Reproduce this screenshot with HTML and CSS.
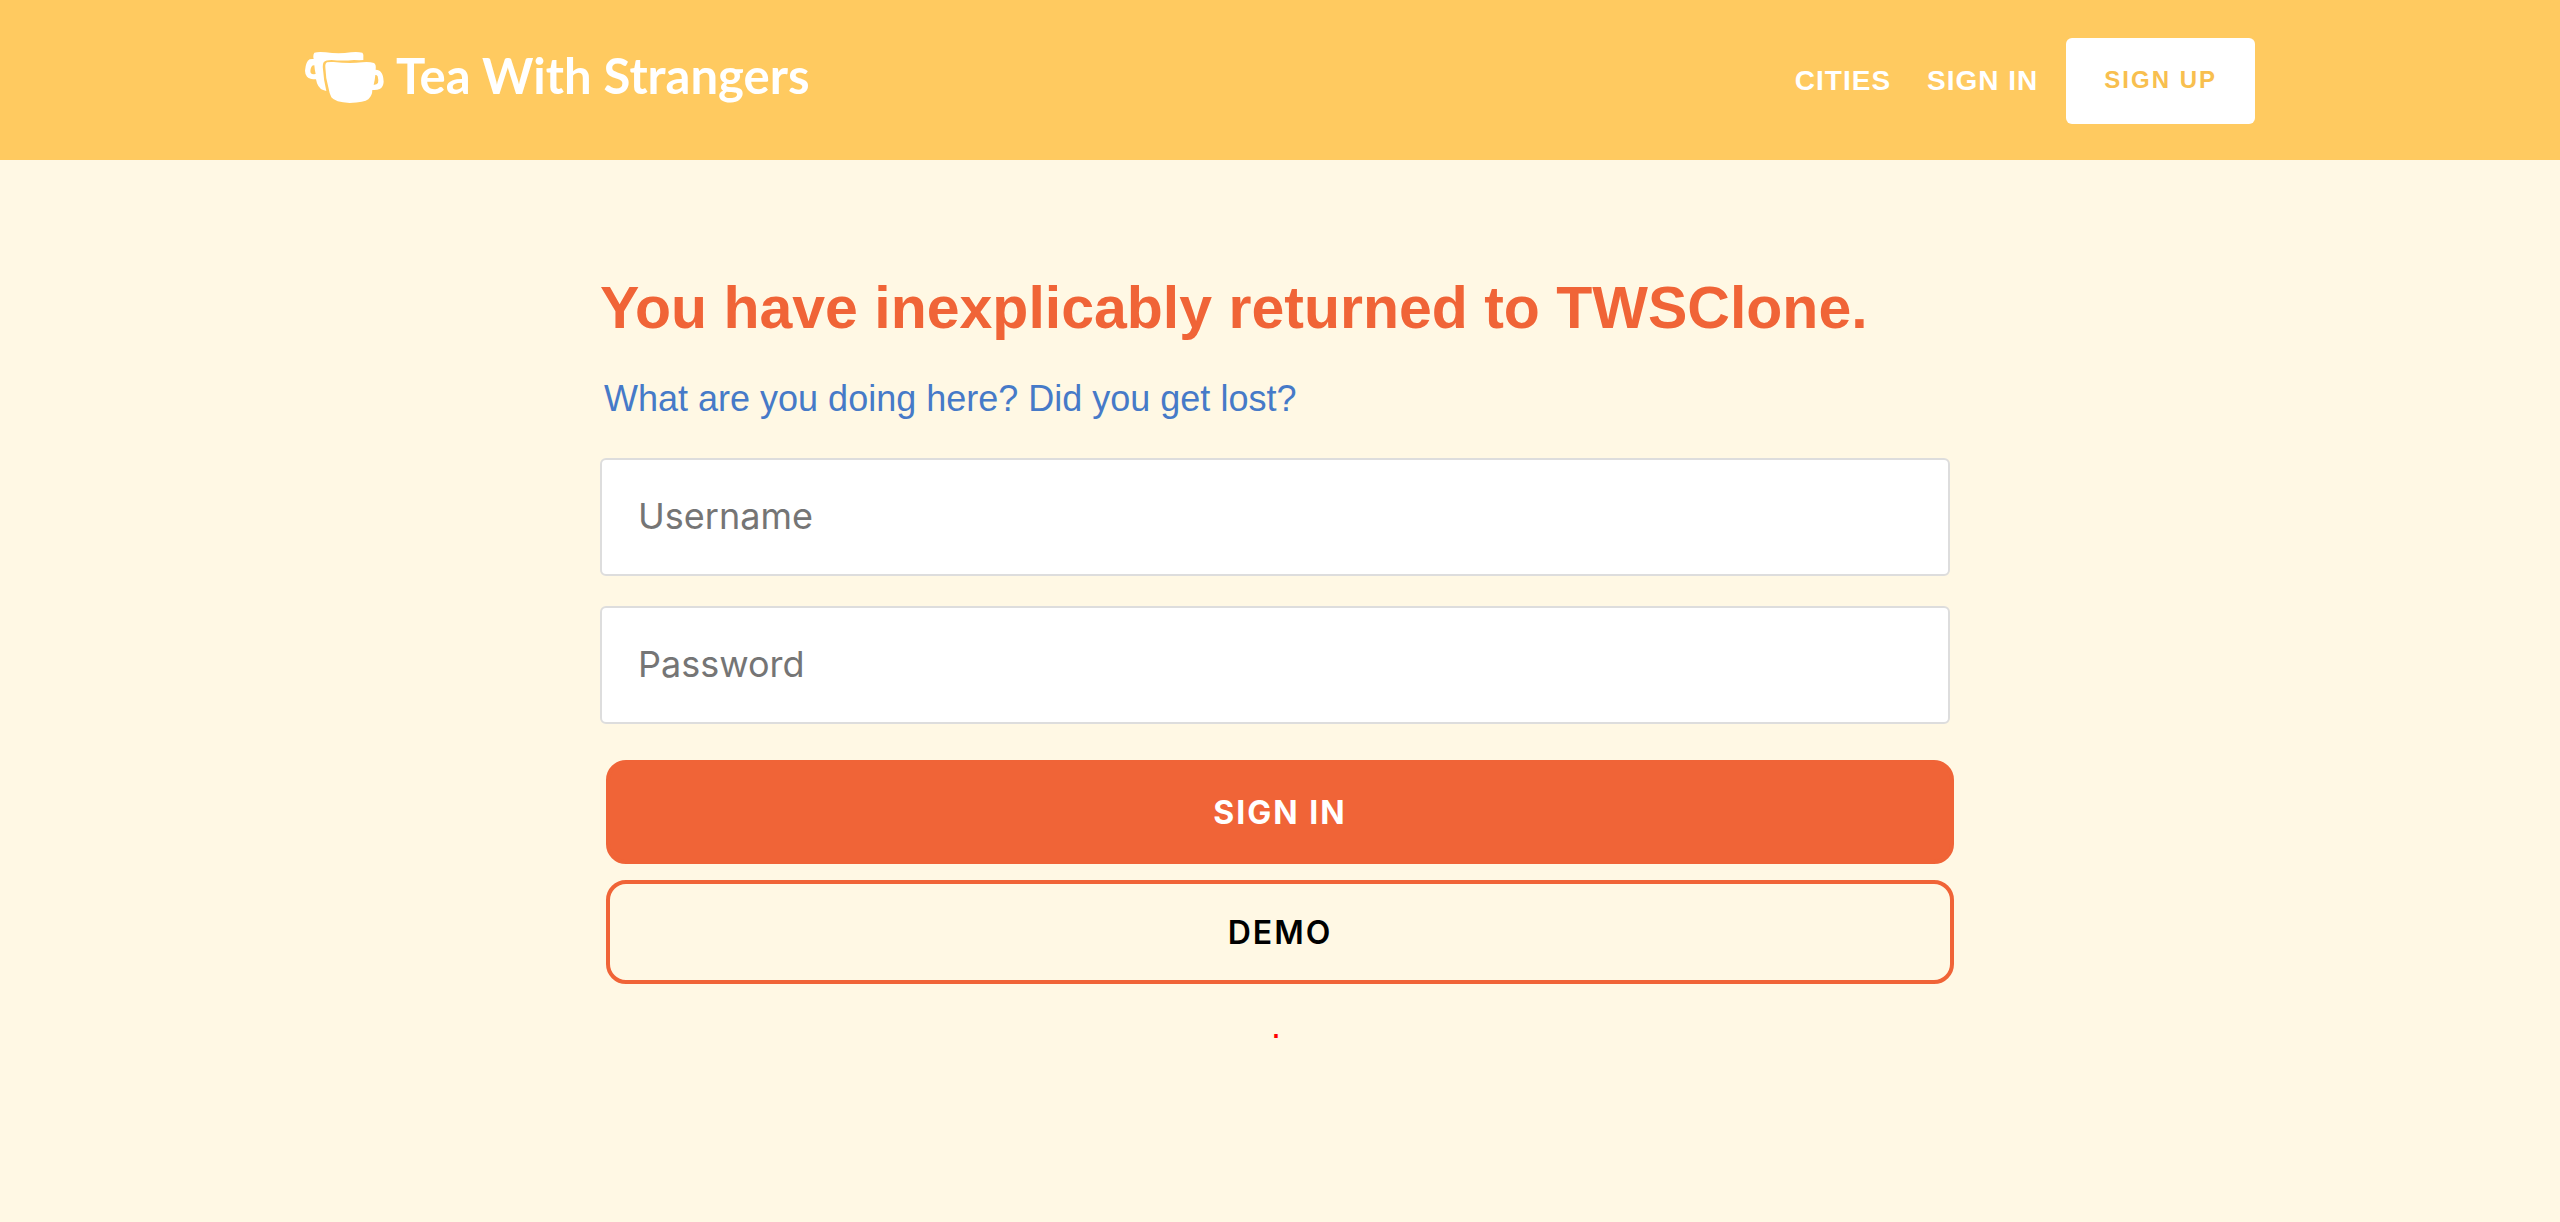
FILE: index.html
```html
<!DOCTYPE html>
<html lang="en">
<head>
<meta charset="utf-8">
<meta name="viewport" content="width=device-width, initial-scale=1">
<title>Sign in - Tea With Strangers</title>
<link rel="stylesheet" href="styles.css">
</head>
<body>
<header class="site-header">
  <div class="header-inner">
    <a class="logo" href="#">
      <svg class="logo-mugs" viewBox="18 36 237 153" aria-hidden="true">
        <path class="mug" d="M46 38Q58 35 80 37Q119 43 156 37Q175 35 190 38Q194 42 193 50V60Q182 61 165 60Q130 63 98 60Q80 60 74 67Q70 74 72 88Q74 122 82 153Q61 150 54 130L51 118Q32 118 24 110Q18 103 18 92Q20 65 32 58Q37 56 44 57Q41 46 46 38ZM46 76Q39 75 36 83Q33 92 35 98Q38 104 50 102Q47 89 46 76Z"/>
        <path class="mug" d="M84 67Q92 65 104 66Q150 71 190 67Q210 65 225 69Q232 73 230 89Q242 89 246 97Q253 105 254 125Q253 142 242 147Q234 151 220 150Q220 166 208 178Q196 188 152 189Q108 187 97 172Q91 160 88 142Q80 115 79 82Q78 70 84 67ZM229 105Q228 119 224 134Q232 135 237 129Q239 119 236 109Q233 104 229 105Z"/>
      </svg>
      <span class="logo-text">Tea With Strangers</span>
    </a>
    <nav class="nav">
      <a class="nav-link" href="#">CITIES</a>
      <a class="nav-link" href="#">SIGN IN</a>
      <a class="nav-button" href="#">SIGN UP</a>
    </nav>
  </div>
</header>
<main class="page">
  <h1 class="title">You have inexplicably returned to TWSClone.</h1>
  <h2 class="subtitle">What are you doing here? Did you get lost?</h2>
  <form class="form">
    <input class="field" type="text" placeholder="Username" aria-label="Username">
    <input class="field" type="password" placeholder="Password" aria-label="Password">
    <div class="actions">
      <button class="button button-primary" type="submit">SIGN IN</button>
      <button class="button button-outline" type="button">DEMO</button>
    </div>
    <p class="error">.</p>
  </form>
</main>
</body>
</html>
```
FILE: styles.css
```css
* {
  box-sizing: border-box;
}

body {
  margin: 0;
  background: #fff8e4;
  color: #000;
  font-family: "Helvetica Neue", "Liberation Sans", Arial, sans-serif;
}

.site-header {
  background: #ffca60;
  padding: 38px 24px 36px;
}

.header-inner {
  display: flex;
  align-items: center;
  justify-content: space-between;
  max-width: 1950px;
  margin: 0 auto;
}

.logo {
  display: flex;
  align-items: flex-start;
  gap: 12px;
  margin-bottom: 8px;
  color: #fff;
  text-decoration: none;
}

.logo-mugs {
  width: 79px;
  height: 51px;
}

.mug {
  fill: #fff;
}

.logo-text {
  font-family: Lato, sans-serif;
  font-size: 49px;
  font-weight: 700;
  line-height: 46px;
}

.nav {
  display: flex;
  align-items: center;
}

.nav-link {
  margin-right: 36px;
  color: #fff;
  font-size: 28px;
  font-weight: 700;
  letter-spacing: 1px;
  line-height: 36px;
  text-decoration: none;
}

.nav-link:nth-child(2) {
  margin-right: 28px;
}

.nav-button {
  padding: 24px 38px 26px;
  border-radius: 6px;
  background: #fff;
  color: #f8bf4f;
  font-size: 24px;
  font-weight: 700;
  letter-spacing: 2px;
  line-height: 36px;
  text-decoration: none;
}

.page {
  max-width: 1360px;
  margin: 0 auto;
  padding: 112px 0 60px;
}

.title {
  margin: 0;
  color: #f06437;
  font-size: 59px;
  font-weight: 700;
  line-height: 72px;
}

.subtitle {
  margin: 32px 0 36px 4px;
  color: #467ac8;
  font-size: 36px;
  font-weight: 400;
  line-height: 46px;
}

.form {
  display: flex;
  flex-direction: column;
}

.field {
  height: 118px;
  margin: 0 10px 30px 0;
  padding: 0 36px 2px;
  border: 2px solid #ddd;
  border-radius: 6px;
  background: #fff;
  font-family: Inter, sans-serif;
  font-size: 36px;
}

.field::placeholder {
  color: #757575;
}

.actions {
  display: flex;
  flex-direction: column;
  gap: 16px;
  margin: 6px 6px 0;
}

.button {
  height: 104px;
  border: 4px solid #f06437;
  border-radius: 20px;
  font-family: Inter, sans-serif;
  font-size: 32px;
  font-weight: 600;
  letter-spacing: 2px;
}

.button-primary {
  background: #f06437;
  color: #fff;
  font-weight: 700;
}

.button-outline {
  background: transparent;
  color: #000;
}

.error {
  margin: 24px 8px 0 0;
  color: #f00;
  font-size: 36px;
  line-height: 36px;
  text-align: center;
}
```
